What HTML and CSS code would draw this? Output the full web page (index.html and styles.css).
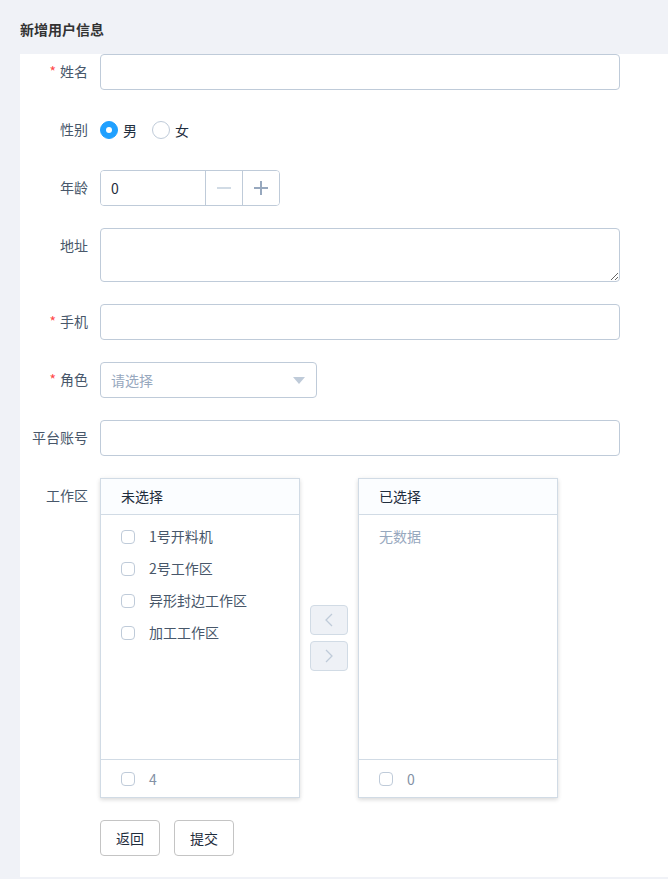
FILE: index.html
```html
<!DOCTYPE html>
<html lang="zh">
<head>
<meta charset="utf-8">
<title>新增用户信息</title>
<link rel="stylesheet" href="styles.css">
</head>
<body>
<div class="page-title">新增用户信息</div>
<div class="card">
  <form class="form">
    <div class="item">
      <label class="label"><span class="req">*</span>姓名</label>
      <div class="content"><input class="input" type="text"></div>
    </div>
    <div class="item">
      <label class="label">性别</label>
      <div class="content radios">
        <span class="radio"><span class="radio-inner checked"></span><span class="radio-label">男</span></span>
        <span class="radio"><span class="radio-inner"></span><span class="radio-label">女</span></span>
      </div>
    </div>
    <div class="item">
      <label class="label">年龄</label>
      <div class="content">
        <div class="num">
          <input class="num-input" type="text" value="0">
          <span class="num-btn">
            <svg width="14" height="14" viewBox="0 0 14 14"><line x1="0" y1="7" x2="14" y2="7" stroke="#d1dbe5" stroke-width="2"/></svg>
          </span>
          <span class="num-btn">
            <svg width="14" height="14" viewBox="0 0 14 14"><line x1="0" y1="7" x2="14" y2="7" stroke="#97a8be" stroke-width="2"/><line x1="7" y1="0" x2="7" y2="14" stroke="#97a8be" stroke-width="2"/></svg>
          </span>
        </div>
      </div>
    </div>
    <div class="item">
      <label class="label">地址</label>
      <div class="content"><textarea class="textarea"></textarea></div>
    </div>
    <div class="item">
      <label class="label"><span class="req">*</span>手机</label>
      <div class="content"><input class="input" type="text"></div>
    </div>
    <div class="item">
      <label class="label"><span class="req">*</span>角色</label>
      <div class="content">
        <div class="select">
          <span class="placeholder">请选择</span>
          <span class="caret"></span>
        </div>
      </div>
    </div>
    <div class="item">
      <label class="label">平台账号</label>
      <div class="content"><input class="input" type="text"></div>
    </div>
    <div class="item">
      <label class="label">工作区</label>
      <div class="content transfer">
        <div class="panel">
          <div class="panel-head">未选择</div>
          <ul class="panel-list">
            <li class="panel-item"><span class="cb"></span>1号开料机</li>
            <li class="panel-item"><span class="cb"></span>2号工作区</li>
            <li class="panel-item"><span class="cb"></span>异形封边工作区</li>
            <li class="panel-item"><span class="cb"></span>加工工作区</li>
          </ul>
          <div class="panel-foot"><span class="cb"></span><span class="count">4</span></div>
        </div>
        <div class="t-buttons">
          <span class="t-btn"><svg width="8" height="14" viewBox="0 0 8 14"><polyline points="7,1 1,7 7,13" fill="none" stroke="#bfcbd9" stroke-width="1.3"/></svg></span>
          <span class="t-btn"><svg width="8" height="14" viewBox="0 0 8 14"><polyline points="1,1 7,7 1,13" fill="none" stroke="#bfcbd9" stroke-width="1.3"/></svg></span>
        </div>
        <div class="panel">
          <div class="panel-head">已选择</div>
          <div class="panel-list"><p class="empty">无数据</p></div>
          <div class="panel-foot"><span class="cb"></span><span class="count">0</span></div>
        </div>
      </div>
    </div>
    <div class="item actions">
      <div class="label"></div>
      <div class="content btns">
        <button type="button" class="btn">返回</button>
        <button type="button" class="btn">提交</button>
      </div>
    </div>
  </form>
</div>
</body>
</html>
```

FILE: styles.css
```css
* { box-sizing: border-box; }
html, body {
  margin: 0;
  padding: 0;
  height: 100%;
}
body {
  background: #f0f2f7;
  font-family: "Noto Sans CJK SC", "Noto Sans", sans-serif;
  font-size: 14px;
  color: #48576a;
  overflow: hidden;
}
.page-title {
  height: 54px;
  padding: 19px 0 0 20px;
  font-size: 14px;
  line-height: 20px;
  font-weight: bold;
  color: #333;
}
.card {
  margin-left: 20px;
  background: #fff;
  height: 823px;
  padding-bottom: 21px;
}
.form {
  width: 600px;
  margin: 0;
}
.item {
  display: flex;
  margin-bottom: 22px;
}
.label {
  width: 80px;
  flex: none;
  text-align: right;
  padding-right: 12px;
  line-height: 35px;
  font-size: 14px;
  color: #48576a;
}
.req {
  color: #ff4949;
  margin-right: 4px;
}
.content {
  flex: 1;
  min-width: 0;
}
.input {
  display: block;
  width: 100%;
  height: 36px;
  border: 1px solid #bfcbd9;
  border-radius: 4px;
  padding: 0 10px;
  font: inherit;
  color: #1f2d3d;
  outline: none;
  background: #fff;
}
.radios {
  display: flex;
  align-items: center;
  height: 36px;
}
.radio {
  display: inline-flex;
  align-items: center;
  color: #1f2d3d;
  line-height: 18px;
}
.radio + .radio { margin-left: 15px; }
.radio-inner {
  width: 18px;
  height: 18px;
  border: 1px solid #bfcbd9;
  border-radius: 50%;
  background: #fff;
  position: relative;
}
.radio-inner.checked {
  background: #20a0ff;
  border-color: #20a0ff;
}
.radio-inner.checked::after {
  content: "";
  position: absolute;
  left: 50%;
  top: 50%;
  width: 6px;
  height: 6px;
  margin: -3px 0 0 -3px;
  border-radius: 50%;
  background: #fff;
}
.radio-label { padding-left: 5px; }
.num {
  display: flex;
  width: 180px;
  height: 36px;
  border: 1px solid #bfcbd9;
  border-radius: 4px;
  overflow: hidden;
}
.num-input {
  flex: 1;
  min-width: 0;
  border: 0;
  padding: 0 10px;
  font: inherit;
  color: #1f2d3d;
  outline: none;
}
.num-btn {
  width: 37px;
  flex: none;
  border-left: 1px solid #bfcbd9;
  display: flex;
  align-items: center;
  justify-content: center;
  background: #fff;
}
.textarea {
  display: block;
  width: 100%;
  height: 54px;
  border: 1px solid #bfcbd9;
  border-radius: 4px;
  padding: 5px 10px;
  font: inherit;
  color: #1f2d3d;
  outline: none;
  resize: vertical;
}
.select {
  width: 217px;
  height: 36px;
  border: 1px solid #bfcbd9;
  border-radius: 4px;
  padding: 0 10px;
  display: flex;
  align-items: center;
  justify-content: space-between;
}
.placeholder { color: #97a8be; }
.caret {
  width: 0;
  height: 0;
  border-left: 6.5px solid transparent;
  border-right: 6.5px solid transparent;
  border-top: 7px solid #bfcbd9;
  margin-right: 1px;
}
.transfer {
  display: flex;
  align-items: center;
}
.panel {
  width: 200px;
  height: 320px;
  border: 1px solid #d1dbe5;
  background: #fff;
  box-shadow: 0 2px 4px rgba(0,0,0,.12), 0 0 6px rgba(0,0,0,.04);
  display: flex;
  flex-direction: column;
}
.panel-head {
  height: 36px;
  line-height: 34px;
  background: #fbfdff;
  border-bottom: 1px solid #d1dbe5;
  padding-left: 20px;
  color: #1f2d3d;
  flex: none;
}
.panel-list {
  flex: 1;
  list-style: none;
  margin: 0;
  padding: 5px 0 0;
}
.panel-item {
  height: 32px;
  display: flex;
  align-items: center;
  padding-left: 20px;
  color: #48576a;
}
.panel-item .cb { margin-top: 1px; }
.cb {
  width: 14px;
  height: 14px;
  border: 1px solid #bfcbd9;
  border-radius: 4px;
  background: #fff;
  margin-right: 14px;
  flex: none;
}
.empty {
  margin: 0;
  padding-left: 20px;
  line-height: 32px;
  color: #97a8be;
}
.panel-foot {
  height: 38px;
  border-top: 1px solid #d1dbe5;
  display: flex;
  align-items: center;
  padding-left: 20px;
  flex: none;
}
.count { color: #8391a5; }
.t-buttons {
  display: flex;
  flex-direction: column;
  gap: 6px;
  margin: 0 10px;
}
.t-btn {
  width: 38px;
  height: 30px;
  border: 1px solid #d1dbe5;
  border-radius: 4px;
  background: #eef1f6;
  display: flex;
  align-items: center;
  justify-content: center;
}
.btns {
  display: flex;
  gap: 14px;
}
.btn {
  width: 60px;
  height: 36px;
  border: 1px solid #c4c4c4;
  border-radius: 4px;
  background: #fff;
  font: inherit;
  color: #1f2d3d;
  padding: 0;
}
```
